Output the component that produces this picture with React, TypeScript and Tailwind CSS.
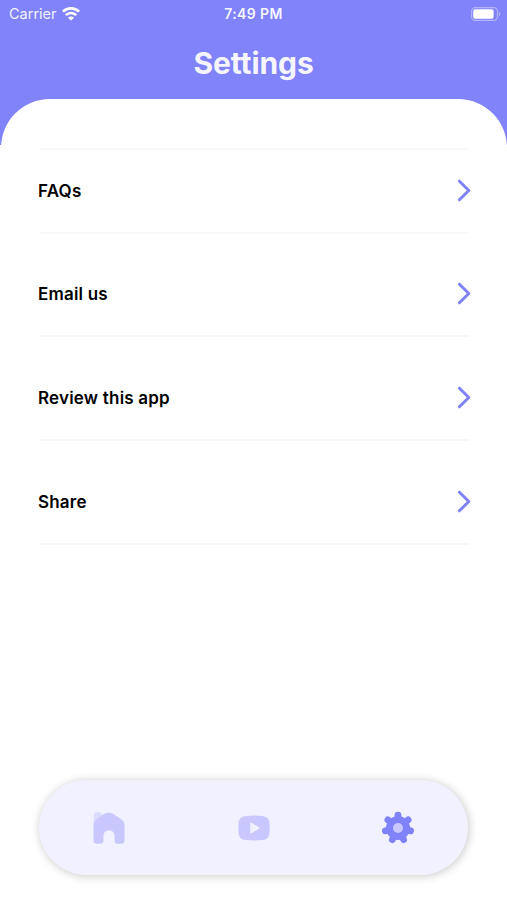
import React from "react";

function WifiIcon() {
  return (
    <svg width="18" height="14" viewBox="0 0 18 14" fill="none" stroke="#fff" strokeWidth="2.6">
      <path d="M0.9 4.6C5.4 0.3 12.6 0.3 17.1 4.6" />
      <path d="M3.8 8.1C6.8 5.2 11.2 5.2 14.2 8.1" />
      <path d="M9 13.6L6 10.7C7.8 9.1 10.2 9.1 12 10.7Z" fill="#fff" stroke="none" />
    </svg>
  );
}

function BatteryIcon() {
  return (
    <svg width="30" height="14" viewBox="0 0 30 14">
      <rect x="0.6" y="0.6" width="25.8" height="12.8" rx="3.6" fill="none" stroke="#fff" strokeOpacity="0.4" strokeWidth="1.1" />
      <rect x="2.2" y="2.3" width="20.4" height="9.4" rx="2" fill="#fff" />
      <path d="M27.8 4.8C29.6 5.6 29.6 8.4 27.8 9.2Z" fill="#fff" fillOpacity="0.5" />
    </svg>
  );
}

function Chevron() {
  return (
    <svg className="-mr-[2px]" width="14" height="24" viewBox="0 0 14 24" fill="none" stroke="#7f82f6" strokeWidth="3" strokeLinecap="round" strokeLinejoin="round">
      <path d="M2.4 2.2L11.8 11.5L2.4 20.8" />
    </svg>
  );
}

function HomeIcon() {
  return (
    <svg className="mr-[3px]" width="32" height="34" viewBox="0 0 32 34">
      <path d="M0.8 12V4Q0.8 1.2 3.4 1.2H6Q8.8 1.2 8.8 4V8Z" fill="#dcdcff" />
      <path d="M0.5 13.2Q0.5 10.6 2.6 8.9L11 3.1Q15.8 0.2 20.6 3.1L29.2 8.9Q31.5 10.6 31.5 13.2V29.6Q31.5 32.8 28.3 32.8H24.8Q21.6 32.8 21.6 29.6V25Q21.6 19.4 16 19.4Q10.4 19.4 10.4 25V29.6Q10.4 32.8 7.2 32.8H3.7Q0.5 32.8 0.5 29.6Z" fill="#c8c8ff" />
    </svg>
  );
}

function VideoIcon() {
  return (
    <svg width="32" height="26" viewBox="0 0 32 26">
      <path d="M0.4 9Q0.4 1.4 8 0.9Q16 0.2 24 0.9Q31.6 1.4 31.6 9V17Q31.6 24.6 24 25.1Q16 25.8 8 25.1Q0.4 24.6 0.4 17Z" fill="#c8c8ff" />
      <path d="M13 8.5V17.5L20.6 13Z" fill="#f1f1ff" stroke="#f1f1ff" strokeWidth="1.6" strokeLinejoin="round" />
    </svg>
  );
}

function GearIcon() {
  return (
    <svg className="ml-[2px]" width="34" height="34" viewBox="-17 -17 34 34">
      <path
        d="M0 0V-12.9M0 0L10.09 -8.04M0 0L12.58 2.87M0 0L5.6 11.62M0 0L-5.6 11.62M0 0L-12.58 2.87M0 0L-10.09 -8.04"
        stroke="#7f82f8"
        strokeWidth="6.8"
        strokeLinecap="round"
      />
      <circle r="12" fill="#7f82f8" />
      <circle r="5" fill="#c8c8ff" />
    </svg>
  );
}

const rows = ["FAQs", "Email us", "Review this app", "Share"];

export default function App() {
  return (
    <div className="flex h-[900px] w-[507px] flex-col overflow-hidden bg-white font-['Inter',sans-serif]">
      <header className="h-[98px] bg-[#8083f9] text-white">
        <div className="grid h-[27px] grid-cols-3 items-center pl-[9px] pr-[6px]">
          <div className="flex items-center gap-[5px] text-[14.5px] text-white/90">
            <span>Carrier</span>
            <WifiIcon />
          </div>
          <span className="-ml-[3px] text-center text-[14px] font-semibold tracking-[0.4px] text-white/95">7:49 PM</span>
          <div className="flex justify-end">
            <BatteryIcon />
          </div>
        </div>
        <h1 className="pt-[13px] text-center text-[30px] font-bold leading-[46px] tracking-[-0.1px] text-[#f5f5ff]">Settings</h1>
      </header>
      <div className="bg-[linear-gradient(#8083f9_47px,#fff_47px)]">
        <div className="ml-px mt-px h-[49px] rounded-t-[49px] bg-white" />
      </div>
      <main className="mx-[38px] flex-1">
        <div className="ml-px h-[2px] bg-[#f9f9f9]" />
        <ul className="-mt-[20px]">
          {rows.map((label) => (
            <li key={label} className="h-[103.7px]">
              <div className="flex h-[101.7px] items-end justify-between pb-[29px]">
                <span className="text-[17px] font-semibold leading-6 tracking-[0.2px] text-black">{label}</span>
                <Chevron />
              </div>
              <div className="ml-[2px] h-[2px] bg-[#f7f7f7]" />
            </li>
          ))}
        </ul>
      </main>
      <nav className="mx-[39px] mb-[25px] grid h-[95px] grid-cols-3 place-items-center rounded-full bg-[#f1f1ff] shadow-[1px_1px_10px_rgba(0,0,0,0.22)]">
        <HomeIcon />
        <VideoIcon />
        <GearIcon />
      </nav>
    </div>
  );
}
